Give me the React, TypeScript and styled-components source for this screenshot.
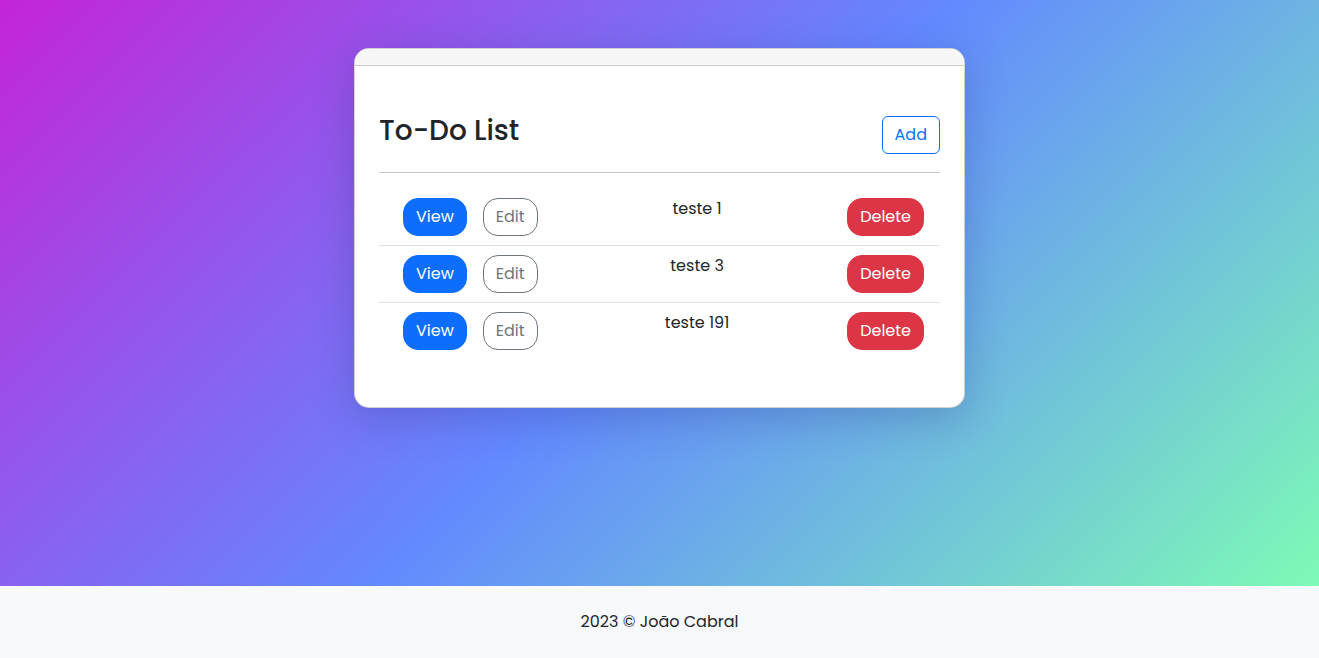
import React from 'react';
import styled, { createGlobalStyle } from 'styled-components';

const GlobalStyle = createGlobalStyle`
  * {
    box-sizing: border-box;
  }

  body {
    margin: 0;
    font-family: Poppins, 'Noto Sans', sans-serif;
    color: #212529;
    background: #f8f9fa;
  }
`;

const Page = styled.div`
  display: flex;
  flex-direction: column;
  min-height: 658px;
`;

const Main = styled.main`
  height: 586px;
  background: linear-gradient(135deg, #c424d8 0%, #6389ff 50%, #7efab6 100%);
  display: flex;
  justify-content: center;
  align-items: flex-start;
  padding-top: 48px;
`;

const Card = styled.div`
  width: 611px;
  background: #fff;
  border: 1px solid rgba(0, 0, 0, 0.175);
  border-radius: 15px;
  overflow: hidden;
  box-shadow: 0 10px 40px rgba(30, 40, 120, 0.25);
`;

const CardHeader = styled.div`
  height: 17px;
  background: #f7f7f7;
  border-bottom: 1px solid rgba(0, 0, 0, 0.175);
`;

const CardBody = styled.div`
  padding: 48px 24px 24px;
`;

const TitleRow = styled.div`
  display: flex;
  justify-content: space-between;
  align-items: flex-start;
`;

const Title = styled.h3`
  margin: 0 0 8px;
  font-size: 28px;
  font-weight: 500;
  line-height: 1.2;
`;

const Divider = styled.hr`
  margin: 16px 0;
  border: 0;
  border-top: 1px solid #c9c9c9;
`;

const List = styled.div`
  margin-bottom: 24px;
`;

const Row = styled.div<{ $last?: boolean }>`
  display: grid;
  grid-template-columns: 144px 1fr auto;
  align-items: start;
  padding: 9px 16px 9px 24px;
  border-bottom: ${p => (p.$last ? 'none' : '1px solid #dee2e6')};
`;

const Actions = styled.div`
  display: flex;
  gap: 16px;
`;

const ItemText = styled.div`
  text-align: center;
  font-size: 16px;
  line-height: 22px;
`;

const Button = styled.button<{ $variant: 'primary' | 'secondary' | 'danger' | 'outline' }>`
  font-family: inherit;
  font-size: 16px;
  line-height: 24px;
  height: 38px;
  padding: 6px 12px;
  cursor: pointer;
  border-radius: ${p => (p.$variant === 'outline' ? '6px' : '15px')};
  border: 1px solid
    ${p =>
      p.$variant === 'primary' || p.$variant === 'outline'
        ? '#0d6efd'
        : p.$variant === 'danger'
        ? '#dc3545'
        : '#6c757d'};
  background: ${p =>
    p.$variant === 'primary' ? '#0d6efd' : p.$variant === 'danger' ? '#dc3545' : 'transparent'};
  color: ${p =>
    p.$variant === 'outline' ? '#0d6efd' : p.$variant === 'secondary' ? '#6c757d' : '#fff'};
`;

const AddButton = styled(Button)`
  margin-top: 2px;
`;

const Footer = styled.footer`
  height: 72px;
  padding-bottom: 2px;
  display: flex;
  align-items: center;
  justify-content: center;
  background: #f8f9fa;
  font-size: 16px;
  color: #212529;
`;

const todos = ['teste 1', 'teste 3', 'teste 191'];

const App: React.FC = () => {
  return (
    <>
      <GlobalStyle />
      <Page>
        <Main>
          <Card>
            <CardHeader />
            <CardBody>
              <TitleRow>
                <Title>To-Do List</Title>
                <AddButton $variant="outline">Add</AddButton>
              </TitleRow>
              <Divider />
              <List>
                {todos.map((todo, i) => (
                  <Row key={todo} $last={i === todos.length - 1}>
                    <Actions>
                      <Button $variant="primary">View</Button>
                      <Button $variant="secondary">Edit</Button>
                    </Actions>
                    <ItemText>{todo}</ItemText>
                    <Button $variant="danger">Delete</Button>
                  </Row>
                ))}
              </List>
            </CardBody>
          </Card>
        </Main>
        <Footer>2023 © João Cabral</Footer>
      </Page>
    </>
  );
};

export default App;
